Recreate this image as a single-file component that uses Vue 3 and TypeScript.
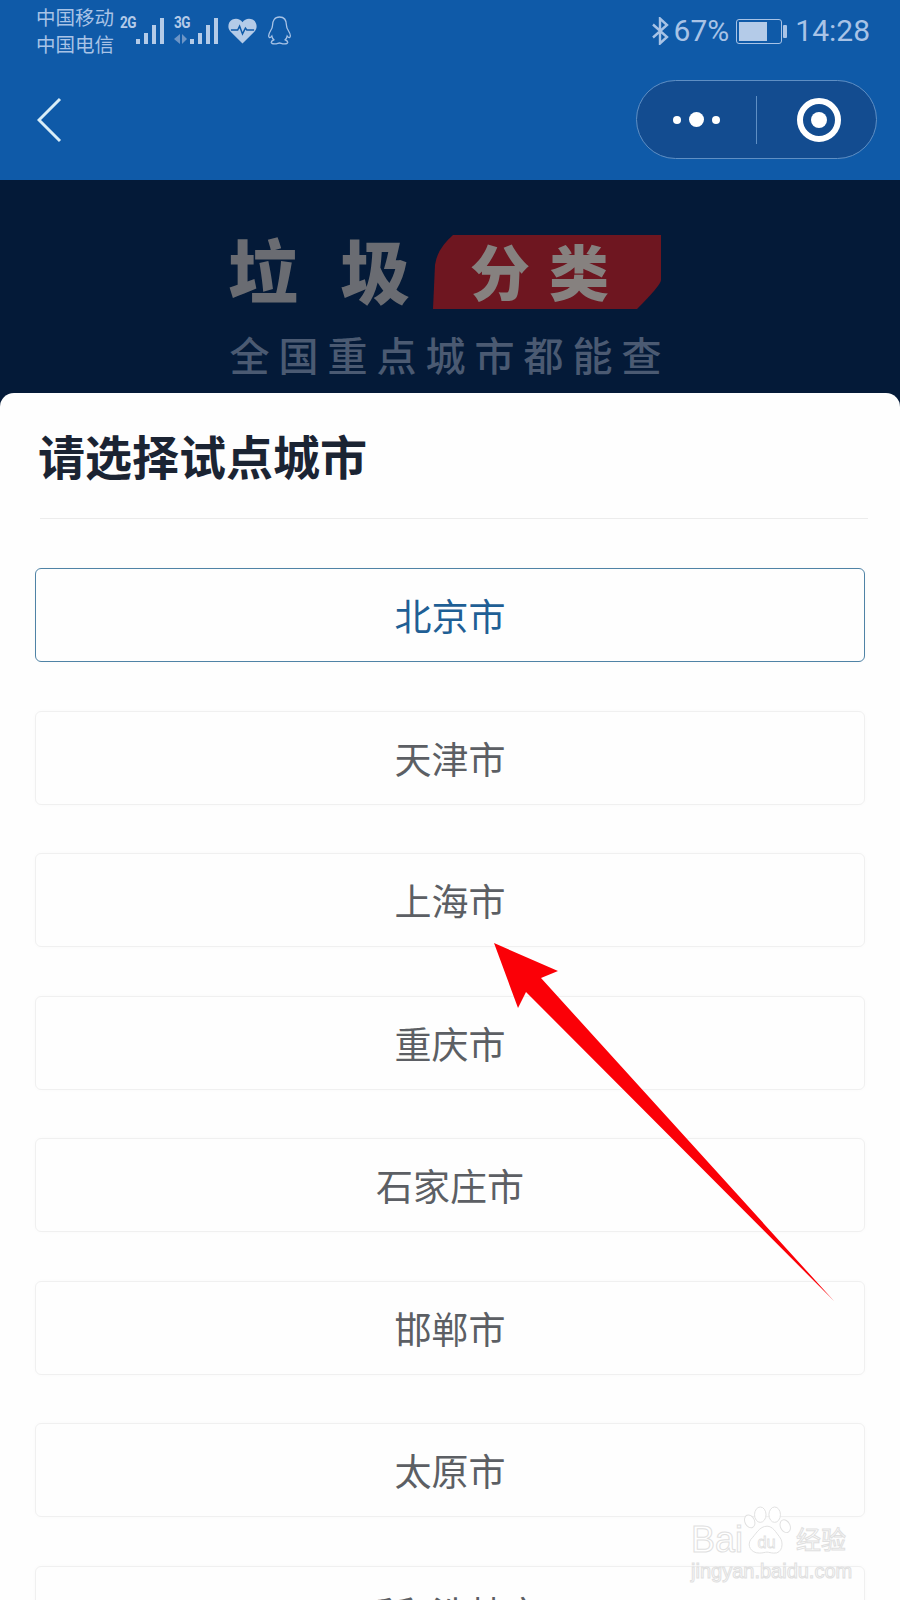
<script setup lang="ts">
const cities = ['北京市', '天津市', '上海市', '重庆市', '石家庄市', '邯郸市', '太原市', '呼和浩特市']
const signalBars = [5, 11, 19, 26]
</script>

<template>
  <div class="page">
    <header class="top">
      <div class="status">
        <div class="status-left">
          <div class="carriers">
            <span>中国移动</span>
            <span>中国电信</span>
          </div>
          <div class="signal">
            <span class="net">2G</span>
            <div class="bars">
              <i v-for="(h, i) in signalBars" :key="i" :style="{ height: h + 'px' }"></i>
            </div>
          </div>
          <div class="signal second">
            <span class="net">3G</span>
            <svg class="updown" width="14" height="10" viewBox="0 0 14 10">
              <path d="M6 0v10L0 5z" fill="#6d95c6" />
              <path d="M8 0v10l5-5z" fill="#6d95c6" />
            </svg>
            <div class="bars">
              <i v-for="(h, i) in signalBars" :key="i" :style="{ height: h + 'px' }"></i>
            </div>
          </div>
          <svg class="heart" width="29" height="26" viewBox="0 0 30 26">
            <path d="M15 26 2.500 13.500C-1 9.800 0 3.500 4.500 1.200 8.500-.8 12.800.6 15 4c2.200-3.400 6.500-4.800 10.500-2.800C30 3.500 31 9.800 27.500 13.500z" fill="#b4cbe8" />
            <path d="M3 12h7l2-4 3 8 3-6 1.500 2H27" fill="none" stroke="#0f5aa8" stroke-width="1.500" />
          </svg>
          <svg class="qq" width="25" height="29" viewBox="0 0 25 29">
            <path d="M12.500 1C7.500 1 5.500 5 5.500 9.500c0 2-.5 3-1.800 5-1.700 2.700-2.400 6-1.300 7 .7.500 1.700-.5 2.400-1.500.3 1.500 1 2.800 2 3.800-1.700.7-2.800 1.500-2.500 2.700.4 1.300 3 1.500 5 1.300 1.300-.2 2.200-.8 3.200-.8s1.900.6 3.200.8c2 .2 4.600 0 5-1.300.3-1.200-.8-2-2.500-2.700 1-1 1.700-2.300 2-3.800.7 1 1.700 2 2.400 1.500 1.100-1 .4-4.300-1.300-7-1.300-2-1.800-3-1.800-5C19.500 5 17.500 1 12.500 1z" fill="none" stroke="#a8c3e6" stroke-width="1.300" />
          </svg>
        </div>
        <div class="status-right">
          <svg class="bt" width="19" height="28" viewBox="0 0 19 28">
            <path d="M2 7.500 16 20l-7 6.500v-25L16 8 2 20.500" fill="none" stroke="#a8c3e6" stroke-width="2.400" />
          </svg>
          <span class="pct">67%</span>
          <div class="battery">
            <div class="cell"><div class="level"></div></div>
            <div class="nub"></div>
          </div>
          <span class="clock">14:28</span>
        </div>
      </div>
      <nav class="nav">
        <svg class="back" width="26" height="46" viewBox="0 0 26 46">
          <path d="M23 2 2 23l21 21" fill="none" stroke="#d9eef8" stroke-width="3" />
        </svg>
        <div class="capsule">
          <div class="more">
            <i class="dot"></i>
            <i class="dot big"></i>
            <i class="dot"></i>
          </div>
          <div class="sep"></div>
          <div class="target"><i></i></div>
        </div>
      </nav>
    </header>

    <section class="banner">
      <div class="banner-top">
        <span class="rubbish">垃圾</span>
        <span class="tag">分类</span>
      </div>
      <div class="banner-sub">全国重点城市都能查</div>
    </section>

    <main class="sheet">
      <h1>请选择试点城市</h1>
      <div class="rule"></div>
      <ul class="cities">
        <li v-for="(c, i) in cities" :key="c" :class="{ active: i === 0 }">{{ c }}</li>
      </ul>
    </main>

    <!-- annotation drawn over the screenshot -->
    <svg class="arrow" width="900" height="1600" viewBox="0 0 900 1600">
      <path d="M494 943 558 971 541 978 834 1301 526 992 518 1008z" fill="#fb0007" />
    </svg>

    <div class="watermark">
      <div class="wm-top">
        <span>Bai</span>
        <svg width="48" height="52" viewBox="0 0 50 52">
          <g fill="#fff" stroke="#e0e0e0" stroke-width="1">
            <ellipse cx="7" cy="16" rx="5" ry="7" transform="rotate(-25 7 16)" />
            <ellipse cx="18" cy="9" rx="6" ry="8" />
            <ellipse cx="33" cy="9" rx="6" ry="8" />
            <ellipse cx="44" cy="21" rx="5" ry="7" transform="rotate(-25 44 21)" />
            <path d="M25 21c6 0 9 6 13 11 5 6 3 18-6 17-3 0-5-1-7-1s-4 1-8 1C8 49 4 41 8 35c5-5 9-14 17-14z" />
          </g>
          <text x="15" y="44" class="wm-du">du</text>
        </svg>
        <span class="wm-cn">经验</span>
      </div>
      <div class="wm-url">jingyan.baidu.com</div>
    </div>
  </div>
</template>

<style scoped>
.page {
  position: relative;
  width: 900px;
  height: 1600px;
  overflow: hidden;
  background: #fefefe;
  font-family: "Noto Sans CJK SC", "Liberation Sans", sans-serif;
}
.top {
  height: 180px;
  box-sizing: border-box;
  background: #0f5aa8;
  display: flex;
  flex-direction: column;
}
.status {
  height: 80px;
  padding: 0 30px 0 36px;
  display: flex;
  justify-content: space-between;
  align-items: flex-start;
  color: #a8c3e6;
}
.status-left {
  display: flex;
  align-items: flex-start;
  padding-top: 3px;
}
.carriers {
  display: flex;
  flex-direction: column;
  font-size: 19.500px;
  line-height: 27px;
  width: 84px;
}
.signal {
  display: flex;
  align-items: flex-end;
  height: 28px;
  margin-top: 13px;
  position: relative;
  width: 44px;
}
.signal.second {
  margin-left: 10px;
}
.net {
  position: absolute;
  left: 0;
  top: 0;
  font-family: "Roboto", sans-serif;
  font-weight: 700;
  font-size: 16px;
  line-height: 14px;
  letter-spacing: -0.6px;
  transform: scaleX(0.85);
  transform-origin: left;
  color: #b4cbe8;
}
.updown {
  position: absolute;
  left: 0;
  bottom: 0;
}
.bars {
  position: absolute;
  right: 0;
  bottom: 0;
  display: flex;
  align-items: flex-end;
  gap: 4px;
}
.bars i {
  display: block;
  width: 4px;
  background: #b4cbe8;
}
.heart {
  margin: 15px 0 0 10px;
}
.qq {
  margin: 13px 0 0 10px;
}
.status-right {
  display: flex;
  align-items: center;
  padding-top: 15px;
  height: 32px;
}
.pct,
.clock {
  font-family: "Roboto", sans-serif;
  font-size: 30px;
  line-height: 32px;
}
.pct {
  margin-left: 4px;
}
.battery {
  display: flex;
  align-items: center;
  margin: 0 8px 0 7px;
}
.cell {
  width: 46px;
  height: 25px;
  box-sizing: border-box;
  border: 1.500px solid #a8c3e6;
  border-radius: 3px;
  padding: 2px;
}
.level {
  width: 70%;
  height: 100%;
  background: #b4cbe8;
}
.nub {
  width: 4px;
  height: 13px;
  margin-left: 1px;
  background: #a8c3e6;
  border-radius: 1px;
}
.nav {
  display: flex;
  align-items: flex-start;
  justify-content: space-between;
  padding: 0 23px 0 37px;
}
.back {
  margin-top: 17px;
}
.capsule {
  width: 241px;
  height: 79px;
  box-sizing: border-box;
  display: flex;
  align-items: center;
  background: #134c90;
  border: 1px solid #5f8fc4;
  border-radius: 40px;
}
.more {
  width: 119px;
  display: flex;
  align-items: center;
  justify-content: center;
  gap: 8px;
}
.dot {
  width: 8px;
  height: 8px;
  border-radius: 50%;
  background: #fff;
}
.dot.big {
  width: 15px;
  height: 15px;
}
.sep {
  width: 1px;
  height: 48px;
  background: #5f8fc4;
}
.target {
  width: 44px;
  height: 44px;
  box-sizing: border-box;
  margin-left: 40px;
  border: 6px solid #fff;
  border-radius: 50%;
  display: flex;
  align-items: center;
  justify-content: center;
}
.target i {
  width: 16px;
  height: 16px;
  border-radius: 50%;
  background: #fff;
}
.banner {
  height: 228px;
  box-sizing: border-box;
  background: #041a38;
  padding-top: 55px;
  display: flex;
  flex-direction: column;
  align-items: center;
}
.banner-top {
  display: flex;
  align-items: center;
  height: 74px;
  margin-right: 11px;
}
.rubbish {
  width: 205px;
  padding-bottom: 6px;
  font-size: 70px;
  font-weight: 900;
  letter-spacing: 42px;
  line-height: 68px;
  white-space: nowrap;
  color: #6a6c72;
}
.tag {
  width: 228px;
  height: 74px;
  display: flex;
  align-items: center;
  padding: 0 0 6px 37px;
  box-sizing: border-box;
  background: #6e1620;
  color: #86817f;
  font-size: 60px;
  font-weight: 900;
  letter-spacing: 19px;
  white-space: nowrap;
  clip-path: path("M0 74 L2 30 Q4 14 20 0 L228 0 L228 45 Q228 50 204 74 Z");
}
.banner-sub {
  margin-top: 21px;
  font-size: 40px;
  line-height: 48px;
  font-weight: 500;
  letter-spacing: 9px;
  white-space: nowrap;
  color: #4b5a72;
}
.sheet {
  margin-top: -15px;
  position: relative;
  background: #fefefe;
  border-radius: 14px 14px 0 0;
  padding: 0 35px;
}
h1 {
  margin: 0;
  padding: 27px 0 0 3px;
  font-size: 47px;
  line-height: 70px;
  font-weight: 700;
  color: #1b2433;
}
.rule {
  height: 1px;
  margin: 28px -3px 0 5px;
  background: #ececec;
}
.cities {
  list-style: none;
  margin: 49px 0 0;
  padding: 0;
  display: flex;
  flex-direction: column;
  gap: 48.500px;
}
.cities li {
  height: 94px;
  box-sizing: border-box;
  display: flex;
  align-items: center;
  justify-content: center;
  border: 1px solid #f0f0f0;
  border-radius: 6px;
  font-size: 37px;
  color: #5c5f64;
  box-shadow: 0 0 4px rgba(0, 0, 0, 0.02);
}
.cities li.active {
  border-color: #4f83a6;
  color: #1f5f95;
}
.arrow {
  position: absolute;
  left: 0;
  top: 0;
  pointer-events: none;
}
.watermark {
  position: absolute;
  left: 691px;
  top: 1503px;
  width: 165px;
  color: #fff;
  font-family: "Liberation Sans", "Noto Sans CJK SC", sans-serif;
  -webkit-text-stroke: 1px #e0e0e0;
}
.wm-top {
  display: flex;
  align-items: flex-end;
  height: 54px;
  font-size: 36px;
  line-height: 34px;
  white-space: nowrap;
}
.wm-top svg {
  margin: 0 5px 0 0;
  flex: none;
}
.wm-cn {
  font-size: 25px;
}
.wm-du {
  font-size: 17px;
  fill: #fff;
  stroke: #e0e0e0;
  stroke-width: 0.8px;
}
.wm-url {
  margin-top: 2px;
  font-size: 20px;
  line-height: 24px;
  white-space: nowrap;
}
</style>
